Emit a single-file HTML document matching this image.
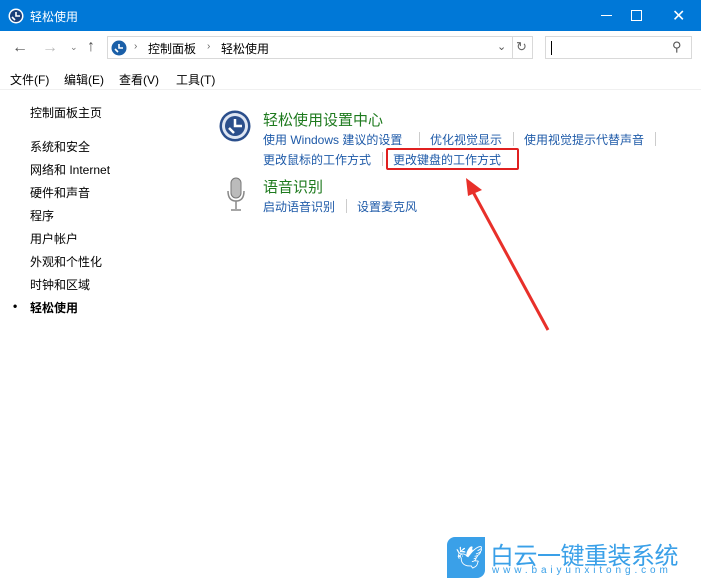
<html><head><style>
body{margin:0;width:701px;height:580px;overflow:hidden;background:#fff;font-family:"Liberation Sans","Noto Sans CJK SC",sans-serif;font-size:12px;color:#000;position:relative}
.a{position:absolute;white-space:nowrap}
.lk{color:#1e5aa8}
.sep{position:absolute;width:1px;height:14px;background:#ccc}
</style></head><body>
<div class="a" style="left:0;top:0;width:701px;height:31px;background:#0078d7"></div>
<svg class="a" style="left:8px;top:8px" width="16" height="16"><circle cx="8" cy="8" r="7.5" fill="#fff"/><circle cx="8" cy="8" r="6" fill="#1a3f7a"/><path d="M8 4v4h4M4 9l3 3" stroke="#fff" stroke-width="1.6" fill="none"/></svg>
<div class="a" style="left:30px;top:8px;color:#fff;font-size:12px">轻松使用</div>
<div class="a" style="left:601px;top:15px;width:11px;height:1px;background:#fff"></div>
<div class="a" style="left:631px;top:10px;width:9px;height:9px;border:1px solid #fff"></div>
<div class="a" style="left:672px;top:6px;color:#fff;font-size:16px">✕</div>
<div class="a" style="left:12px;top:39px;color:#555;font-size:16px">←</div>
<div class="a" style="left:42px;top:39px;color:#bbb;font-size:16px">→</div>
<div class="a" style="left:70px;top:42px;color:#777;font-size:9px">⌄</div>
<div class="a" style="left:87px;top:38px;color:#555;font-size:16px">↑</div>
<div class="a" style="left:107px;top:36px;width:426px;height:23px;border:1px solid #d9d9d9;box-sizing:border-box"></div>
<div class="a" style="left:512px;top:36px;width:1px;height:23px;background:#d9d9d9"></div>
<svg class="a" style="left:111px;top:40px" width="16" height="16"><circle cx="8" cy="8" r="7.5" fill="#1a5fa8"/><path d="M8 4v4h4M4 9l3 3" stroke="#fff" stroke-width="1.6" fill="none"/></svg>
<div class="a" style="left:134px;top:41px;color:#666;font-size:10px">›</div>
<div class="a" style="left:148px;top:40px">控制面板</div>
<div class="a" style="left:207px;top:41px;color:#666;font-size:10px">›</div>
<div class="a" style="left:221px;top:40px">轻松使用</div>
<div class="a" style="left:497px;top:40px;color:#555;font-size:11px">⌄</div>
<div class="a" style="left:516px;top:39px;color:#666;font-size:13px">↻</div>
<div class="a" style="left:545px;top:36px;width:147px;height:23px;border:1px solid #d9d9d9;box-sizing:border-box"></div>
<div class="a" style="left:551px;top:41px;width:1px;height:14px;background:#000"></div>
<div class="a" style="left:672px;top:39px;color:#555;font-size:13px">⚲</div>
<div class="a" style="left:10px;top:71px">文件(F)</div>
<div class="a" style="left:64px;top:71px">编辑(E)</div>
<div class="a" style="left:119px;top:71px">查看(V)</div>
<div class="a" style="left:176px;top:71px">工具(T)</div>
<div class="a" style="left:0;top:89px;width:701px;height:1px;background:#f0f0f0"></div>
<div class="a" style="left:30px;top:104px">控制面板主页</div>
<div class="a" style="left:30px;top:138px">系统和安全</div>
<div class="a" style="left:30px;top:161px">网络和 Internet</div>
<div class="a" style="left:30px;top:184px">硬件和声音</div>
<div class="a" style="left:30px;top:207px">程序</div>
<div class="a" style="left:30px;top:230px">用户帐户</div>
<div class="a" style="left:30px;top:253px">外观和个性化</div>
<div class="a" style="left:30px;top:276px">时钟和区域</div>
<div class="a" style="left:13px;top:299px;font-weight:bold">•</div>
<div class="a" style="left:30px;top:299px;font-weight:bold">轻松使用</div>
<svg class="a" style="left:219px;top:110px" width="32" height="32"><circle cx="16" cy="16" r="15.5" fill="#2b4f8c"/><circle cx="16" cy="16" r="13" fill="#dfe6f3"/><circle cx="16" cy="16" r="10" fill="#2b4f8c"/><path d="M16 9v7h7M10 18l5 5" stroke="#fff" stroke-width="2.5" fill="none"/></svg>
<div class="a" style="left:263px;top:109px;font-size:15px;color:#1e7a1e">轻松使用设置中心</div>
<div class="a lk" style="left:263px;top:131px">使用 Windows 建议的设置</div>
<div class="sep" style="left:419px;top:132px"></div>
<div class="a lk" style="left:430px;top:131px">优化视觉显示</div>
<div class="sep" style="left:513px;top:132px"></div>
<div class="a lk" style="left:524px;top:131px">使用视觉提示代替声音</div>
<div class="sep" style="left:655px;top:132px"></div>
<div class="a lk" style="left:263px;top:151px">更改鼠标的工作方式</div>
<div class="sep" style="left:382px;top:152px"></div>
<div class="a lk" style="left:393px;top:151px">更改键盘的工作方式</div>
<div class="a" style="left:386px;top:148px;width:133px;height:22px;border:2px solid #e02020;border-radius:2px;box-sizing:border-box"></div>
<svg class="a" style="left:226px;top:177px" width="20" height="36"><rect x="5" y="1" width="10" height="20" rx="5" fill="#bbb" stroke="#777"/><path d="M2 14q0 10 8 10t8-10M10 24v8M5 33h10" stroke="#888" stroke-width="1.5" fill="none"/></svg>
<div class="a" style="left:263px;top:176px;font-size:15px;color:#1e7a1e">语音识别</div>
<div class="a lk" style="left:263px;top:198px">启动语音识别</div>
<div class="sep" style="left:346px;top:199px"></div>
<div class="a lk" style="left:357px;top:198px">设置麦克风</div>
<svg class="a" style="left:0;top:0" width="701" height="580"><path d="M548 330L472 190" stroke="#e8302a" stroke-width="3"/><path d="M466 178l16 12-14 6z" fill="#e8302a"/></svg>
<div class="a" style="left:447px;top:537px;width:38px;height:41px;background:#3aa0e8;border-radius:8px 0 8px 0"></div>
<div class="a" style="left:455px;top:545px;color:#fff;font-size:22px">🕊</div>
<div class="a" style="left:490px;top:536px;font-size:24px;color:#3aa0e8;letter-spacing:-0.5px">白云一键重装系统</div>
<div class="a" style="left:492px;top:565px;font-size:10px;color:#3aa0e8;letter-spacing:3.9px">www.baiyunxitong.com</div>
</body></html>
